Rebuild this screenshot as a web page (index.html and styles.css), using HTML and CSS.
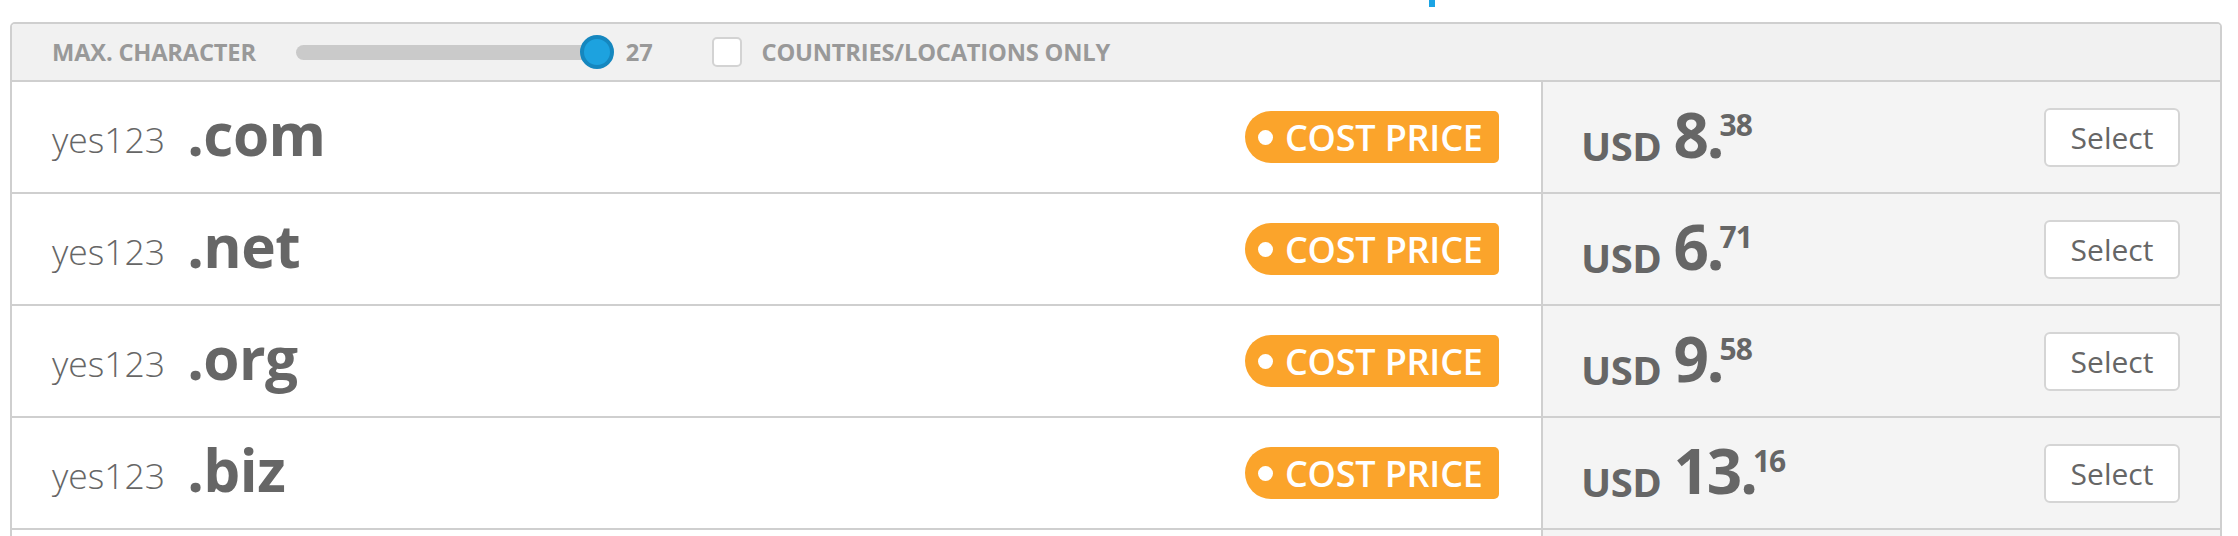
FILE: index.html
```html
<!DOCTYPE html>
<html>
<head>
<meta charset="utf-8">
<link rel="stylesheet" href="styles.css">
</head>
<body>
<div class="top"><span class="top-mark"></span></div>
<div class="table">
  <div class="toolbar">
    <span class="label">MAX. CHARACTER</span>
    <div class="slider"><div class="track"></div><div class="thumb"></div></div>
    <span class="label value">27</span>
    <span class="checkbox"></span>
    <span class="label">COUNTRIES/LOCATIONS ONLY</span>
  </div>

  <div class="row">
    <div class="name-cell">
      <span class="sld">yes123</span><span class="tld">.com</span>
      <span class="badge"><span class="dot"></span>COST PRICE</span>
    </div>
    <div class="price-cell">
      <span class="price"><span class="cur">USD</span><span class="int">8.</span><span class="dec">38</span></span>
      <button class="select">Select</button>
    </div>
  </div>

  <div class="row">
    <div class="name-cell">
      <span class="sld">yes123</span><span class="tld">.net</span>
      <span class="badge"><span class="dot"></span>COST PRICE</span>
    </div>
    <div class="price-cell">
      <span class="price"><span class="cur">USD</span><span class="int">6.</span><span class="dec">71</span></span>
      <button class="select">Select</button>
    </div>
  </div>

  <div class="row">
    <div class="name-cell">
      <span class="sld">yes123</span><span class="tld">.org</span>
      <span class="badge"><span class="dot"></span>COST PRICE</span>
    </div>
    <div class="price-cell">
      <span class="price"><span class="cur">USD</span><span class="int">9.</span><span class="dec">58</span></span>
      <button class="select">Select</button>
    </div>
  </div>

  <div class="row">
    <div class="name-cell">
      <span class="sld">yes123</span><span class="tld">.biz</span>
      <span class="badge"><span class="dot"></span>COST PRICE</span>
    </div>
    <div class="price-cell">
      <span class="price"><span class="cur">USD</span><span class="int">13.</span><span class="dec">16</span></span>
      <button class="select">Select</button>
    </div>
  </div>

  <div class="row">
    <div class="name-cell"></div>
    <div class="price-cell"></div>
  </div>
</div>
</body>
</html>
```

FILE: styles.css
```css
* { box-sizing: border-box; }
html, body { margin: 0; padding: 0; background: #fff; }
body {
  font-family: "Open Sans", "Liberation Sans", sans-serif;
  color: #666;
  height: 536px;
  overflow: hidden;
}
.top { height: 22px; }
.top-mark {
  display: block;
  width: 6px;
  height: 7px;
  margin-left: 1429px;
  background: #1ba4e4;
}
.table {
  margin: 0 16px 0 10px;
  border: 2px solid #cfcfcf;
  border-radius: 5px 5px 0 0;
}
.toolbar {
  height: 58px;
  background: #f1f1f1;
  border-bottom: 2px solid #cfcfcf;
  display: flex;
  align-items: center;
  padding-left: 40px;
  border-radius: 3px 3px 0 0;
}
.label {
  font-size: 23.7px;
  font-weight: 700;
  color: #999;
  letter-spacing: -0.2px;
}
.slider {
  position: relative;
  width: 318px;
  height: 34px;
  margin-left: 40px;
  display: flex;
  align-items: center;
}
.track {
  width: 302px;
  height: 15px;
  border-radius: 8px;
  background: #cacaca;
}
.thumb {
  position: absolute;
  left: 284px;
  top: 0;
  width: 34px;
  height: 34px;
  border-radius: 50%;
  background: #1da2df;
  border: 4px solid #1587bf;
}
.value { margin-left: 12px; }
.checkbox {
  width: 30px;
  height: 30px;
  margin-left: 59px;
  margin-right: 20px;
  background: #fff;
  border: 2px solid #d3d3d3;
  border-radius: 5px;
}
.row {
  display: grid;
  grid-template-columns: 1fr 679px;
  height: 112px;
  border-bottom: 2px solid #cfcfcf;
}
.name-cell {
  display: flex;
  align-items: center;
  padding-left: 40px;
  padding-right: 42px;
  background: #fff;
}
.sld {
  font-size: 35.5px;
  font-weight: 300;
  color: #666;
  margin-right: 22px;
  margin-top: 4px;
}
.tld {
  font-size: 58.5px;
  font-weight: 700;
  color: #666;
  letter-spacing: -0.5px;
  margin-top: -8px;
}
.badge {
  margin-left: auto;
  height: 52px;
  width: 254px;
  background: #fba42b;
  border-radius: 26px 5px 5px 26px;
  color: #fff;
  font-size: 36px;
  font-weight: 600;
  display: flex;
  align-items: center;
  padding-left: 12px;
  letter-spacing: -0.2px;
}
.dot {
  width: 15px;
  height: 15px;
  border-radius: 50%;
  background: #fff;
  margin-right: 12px;
  margin-left: 1px;
}
.price-cell {
  background: #f4f4f4;
  border-left: 2px solid #cfcfcf;
  display: flex;
  align-items: center;
  justify-content: space-between;
  padding-left: 38px;
  padding-right: 40px;
}
.price {
  display: flex;
  align-items: flex-start;
  color: #666;
  margin-top: 2px;
}
.cur {
  font-size: 40px;
  font-weight: 700;
  margin-top: 15px;
  margin-right: 12px;
  letter-spacing: -0.5px;
}
.int {
  font-size: 62px;
  font-weight: 700;
  line-height: 1;
  letter-spacing: -2px;
}
.dec {
  font-size: 30px;
  font-weight: 700;
  line-height: 1;
  margin-top: 7px;
  margin-left: -3px;
  letter-spacing: -1px;
}
.select {
  width: 136px;
  height: 59px;
  background: #fff;
  border: 2px solid #d5d5d5;
  border-radius: 6px;
  font-family: "Open Sans", "Liberation Sans", sans-serif;
  font-size: 30px;
  font-weight: 400;
  color: #666;
  padding: 0;
}
```
